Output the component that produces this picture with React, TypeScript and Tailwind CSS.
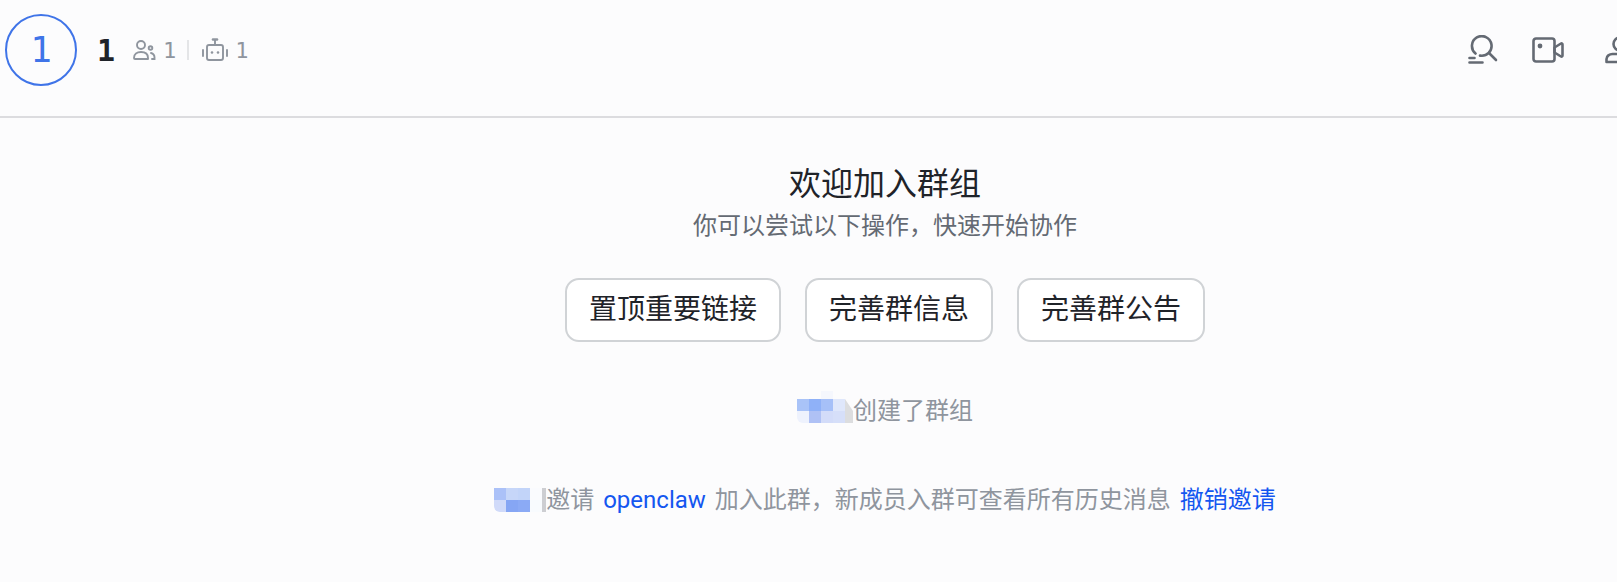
import { ReactNode } from 'react';

function MemberIcon() {
  return (
    <svg width="24" height="22" viewBox="0 0 24 22" fill="none" stroke="#8f959e" strokeWidth="1.9">
      <circle cx="9" cy="6" r="4" />
      <path d="M2 19c0-4 3-6 7-6s7 2 7 6v1H3a1 1 0 0 1-1-1z" strokeLinejoin="round" />
      <circle cx="18.5" cy="9" r="1.8" />
      <path d="M19 14c2 .5 3.5 2 3.5 4.500V20H20" strokeLinecap="round" />
    </svg>
  );
}

function BotIcon() {
  return (
    <svg width="26" height="24" viewBox="0 0 26 24" fill="none" stroke="#8f959e" strokeWidth="1.9">
      <rect x="5" y="7" width="16" height="15" rx="2" />
      <path d="M13 2v5M1 12v6M25 12v6" strokeLinecap="round" />
      <path d="M11 1.500h4" strokeWidth="2.600" strokeLinecap="round" />
      <circle cx="10" cy="14.500" r="1.300" fill="#8f959e" stroke="none" />
      <circle cx="16" cy="14.500" r="1.300" fill="#8f959e" stroke="none" />
    </svg>
  );
}

function SearchIcon() {
  return (
    <svg width="30" height="30" viewBox="0 0 30 30" fill="none" stroke="#646a73" strokeWidth="2.600" strokeLinecap="round">
      <path d="M7.500 18.500A9.800 9.800 0 1 1 12 20.600" />
      <path d="M21 18l7 7" />
      <path d="M1.500 23h5M1.500 27.500h13" />
    </svg>
  );
}

function VideoIcon() {
  return (
    <svg width="32" height="26" viewBox="0 0 32 26" fill="none" stroke="#646a73" strokeWidth="2.600" strokeLinejoin="round">
      <rect x="1.500" y="1.500" width="21" height="23" rx="2.500" />
      <path d="M22.500 10.500l6.500-4a1 1 0 0 1 1.500 1v11a1 1 0 0 1-1.500 1l-6.500-4z" />
      <circle cx="8" cy="9" r="2.400" fill="#646a73" stroke="none" />
    </svg>
  );
}

function UserIcon() {
  return (
    <svg width="30" height="28" viewBox="0 0 30 28" fill="none" stroke="#646a73" strokeWidth="2.600">
      <circle cx="15" cy="8" r="6.500" />
      <path d="M1.500 26v-3c0-3 3-5 6-5h15c3 0 6 2 6 5v3z" strokeLinejoin="round" />
    </svg>
  );
}

// pixelated name, one row of blocks per array
function Mosaic({ rows }: { rows: string[][] }) {
  return (
    <span className="inline-flex flex-col shrink-0 rounded-bl-md overflow-hidden">
      {rows.map((row, i) => (
        <span key={i} className="flex">
          {row.map((c, j) => (
            <span key={j} className="w-3 h-3" style={{ backgroundColor: c }} />
          ))}
        </span>
      ))}
    </span>
  );
}

function ActionButton({ children }: { children: ReactNode }) {
  return (
    <button className="h-16 px-[22px] rounded-[14px] border-2 border-[#d0d3d6] bg-white text-[28px] leading-[40px] text-[#1f2329]">
      {children}
    </button>
  );
}

export default function App() {
  return (
    <div className="h-[582px] w-[1617px] overflow-hidden bg-[#fcfcfd]">
      {/* the panel runs on past the right edge of the window */}
      <div className="w-[1770px]" style={{ fontFamily: 'Roboto, "Noto Sans CJK SC", sans-serif' }}>
        {/* Header */}
        <div className="h-[118px] border-b-2 border-[#dcdcdf] flex items-start justify-between pl-[5px] pr-[135px]">
          <div className="flex items-center h-[100px]">
            <div className="w-[72px] h-[72px] rounded-full border-2 border-[#3f74e8] flex items-center justify-center text-[36px] text-[#3f74e8] [font-family:'DejaVu_Sans_Mono',monospace]">
              1
            </div>
            <span className="ml-[20px] text-[30px] font-bold text-[#1f2329] [font-family:'DejaVu_Sans_Mono',monospace]">1</span>
            <span className="ml-[17px]"><MemberIcon /></span>
            <span className="ml-[7px] text-[22px] text-[#8f959e] [font-family:'DejaVu_Sans_Mono',monospace]">1</span>
            <span className="ml-[11px] w-[2px] h-5 bg-[#e4e5e7]" />
            <span className="ml-[13px]"><BotIcon /></span>
            <span className="ml-[7px] text-[22px] text-[#8f959e] [font-family:'DejaVu_Sans_Mono',monospace]">1</span>
          </div>
          <div className="flex items-center h-[100px] shrink-0 gap-[34px]">
            <SearchIcon />
            <VideoIcon />
            <span className="ml-[7px]"><UserIcon /></span>
          </div>
        </div>

        {/* Welcome */}
        <div className="flex flex-col items-center">
          <h1 className="mt-[44px] text-[32px] leading-[44px] font-normal text-[#1f2329]">欢迎加入群组</h1>
          <p className="mt-[2px] text-[24px] leading-[36px] text-[#646a73]">你可以尝试以下操作{'\uFF0C'}快速开始协作</p>
          <div className="mt-[34px] flex gap-6">
            <ActionButton>置顶重要链接</ActionButton>
            <ActionButton>完善群信息</ActionButton>
            <ActionButton>完善群公告</ActionButton>
          </div>

          <div className="mt-[51px] flex items-center text-[24px] leading-[36px] text-[#8f959e]">
            <span className="relative flex">
              <Mosaic
                rows={[
                  ['#a9c3f8', '#8fb1f8', '#a6c0f8', '#dfe7fb'],
                  ['#eef2fd', '#afc1f5', '#d3dcf9', '#d6dff9'],
                ]}
              />
              <span className="absolute left-6 -top-2 w-3 h-2 bg-[#f5f7fd]" />
              <span className="w-2 h-6 bg-[#dcdddf] [clip-path:polygon(0_0,100%_50%,100%_100%,0_100%)]" />
            </span>
            <span>创建了群组</span>
          </div>

          <div className="mt-[53px] flex items-center text-[24px] leading-[36px] text-[#8f959e] whitespace-pre">
            <Mosaic
              rows={[
                ['#abc1f8', '#c6d6f9', '#c2d4f9', '#fafbfe'],
                ['#d0daf9', '#86a6f4', '#8baaf5', '#f8fbfe'],
              ]}
            />
            <span className="w-1 h-6 bg-[#cdced2]" />
            <span>邀请</span>
            <span className="mx-[9px] text-[#1456f0]">openclaw</span>
            <span>加入此群{'\uFF0C'}新成员入群可查看所有历史消息</span>
            <span className="ml-[9px] text-[#1456f0]">撤销邀请</span>
          </div>
        </div>
      </div>
    </div>
  );
}
